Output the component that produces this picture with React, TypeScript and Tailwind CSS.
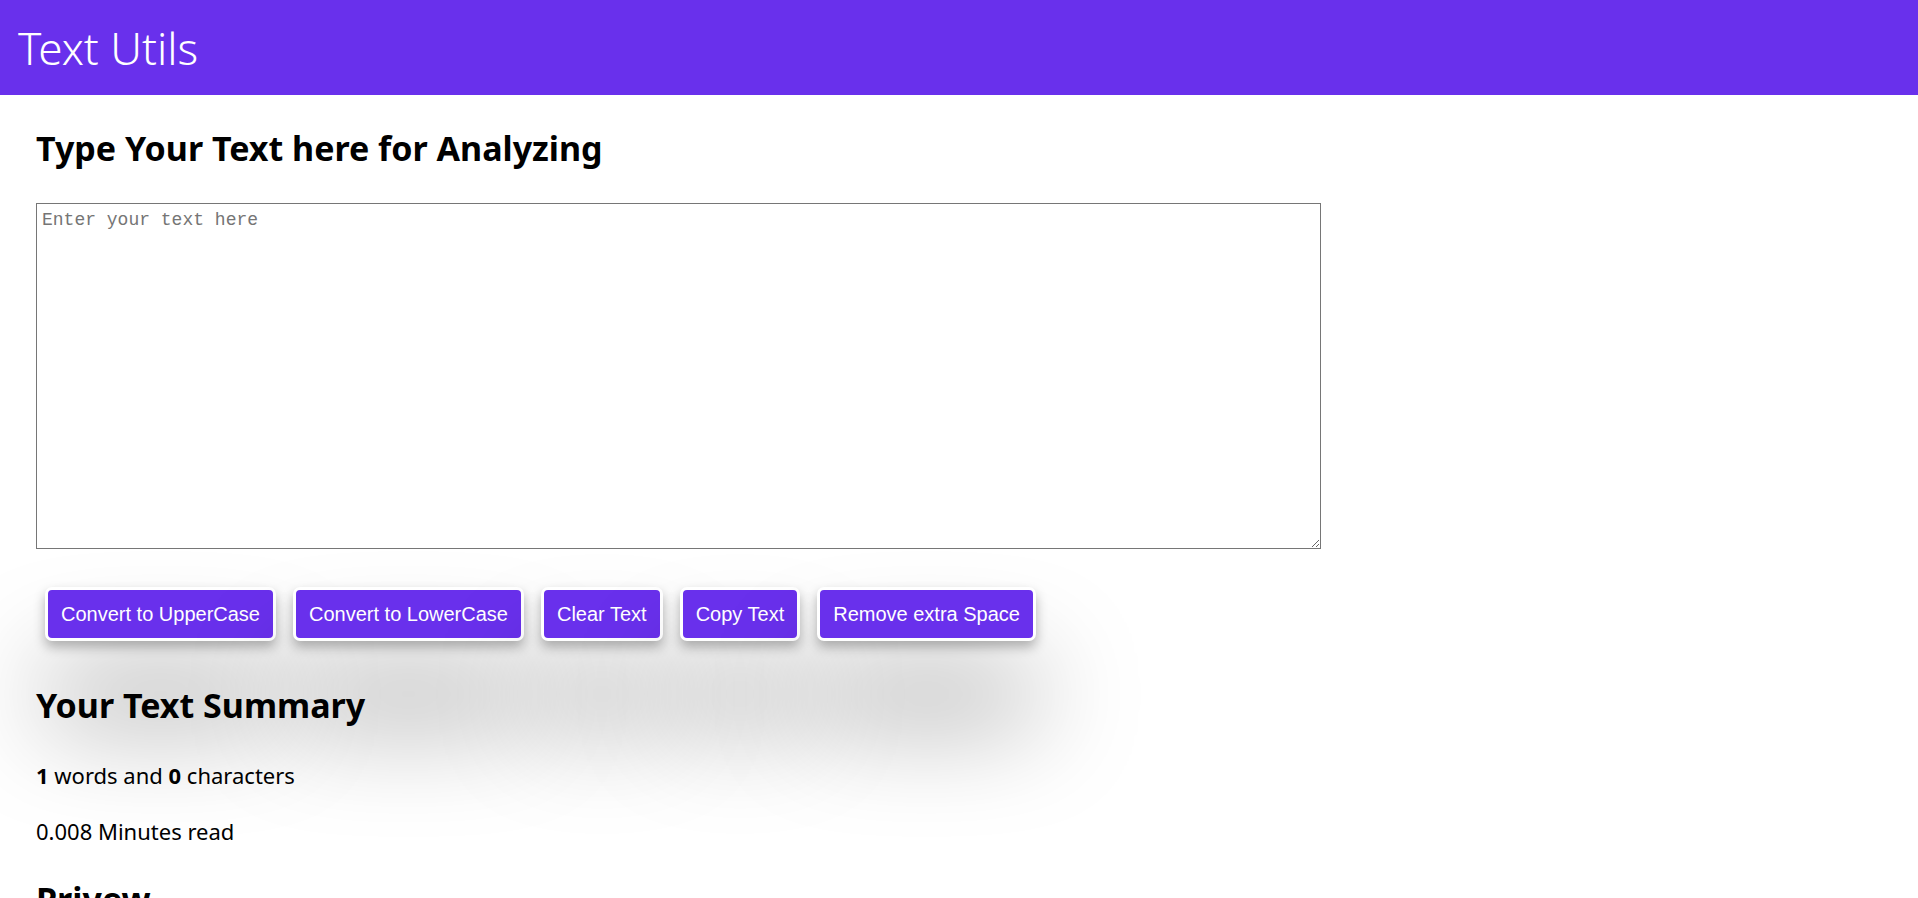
import React, { useState } from "react";

const buttons = [
  "Convert to UpperCase",
  "Convert to LowerCase",
  "Clear Text",
  "Copy Text",
  "Remove extra Space",
];

export default function App() {
  const [text, setText] = useState("");
  const words = text.split(" ").length;

  return (
    <div className="min-h-[1000px] bg-white font-['Segoe_UI','Noto_Sans',sans-serif] text-black">
      <nav className="flex h-[95px] items-center bg-[#6930ec] px-[18px]">
        <div className="text-[44px] font-light leading-none text-white">Text Utils</div>
      </nav>

      <div className="px-[36px] pt-[33px]">
        <h1 className="text-[34px] font-bold leading-[1.2]">Type Your Text here for Analyzing</h1>

        <textarea
          className="mt-[34px] block h-[346px] w-[1285px] border border-[#767676] px-[5px] py-[3px] font-['Liberation_Mono',monospace] text-[18px] placeholder:text-[#757575]"
          placeholder="Enter your text here"
          value={text}
          onChange={(e) => setText(e.target.value)}
        />

        <div className="mt-[38px] flex gap-[17px] pl-[9px]">
          {buttons.map((b) => (
            <button
              key={b}
              className="h-[54px] rounded-[7px] border-[3px] border-white bg-[#6930ec] px-[13px] font-['Liberation_Sans',sans-serif] text-[20px] text-white shadow-[0_6px_12px_rgba(0,0,0,0.28),0_80px_105px_rgba(0,0,0,0.36)]"
            >
              {b}
            </button>
          ))}
        </div>

        <h2 className="mt-[44px] text-[34px] font-bold leading-[1.2]">Your Text Summary</h2>
        <p className="mt-[33px] text-[22px] leading-[1.5]">
          <b>{words}</b> words and <b>{text.length}</b> characters
        </p>
        <p className="mt-[23px] text-[22px] leading-[1.5]">{0.008 * words} Minutes read</p>
        <h2 className="mt-[31px] text-[34px] font-bold leading-[1.2]">Privew</h2>
        <p className="mt-[16px] text-[22px]">{text}</p>
      </div>
    </div>
  );
}
